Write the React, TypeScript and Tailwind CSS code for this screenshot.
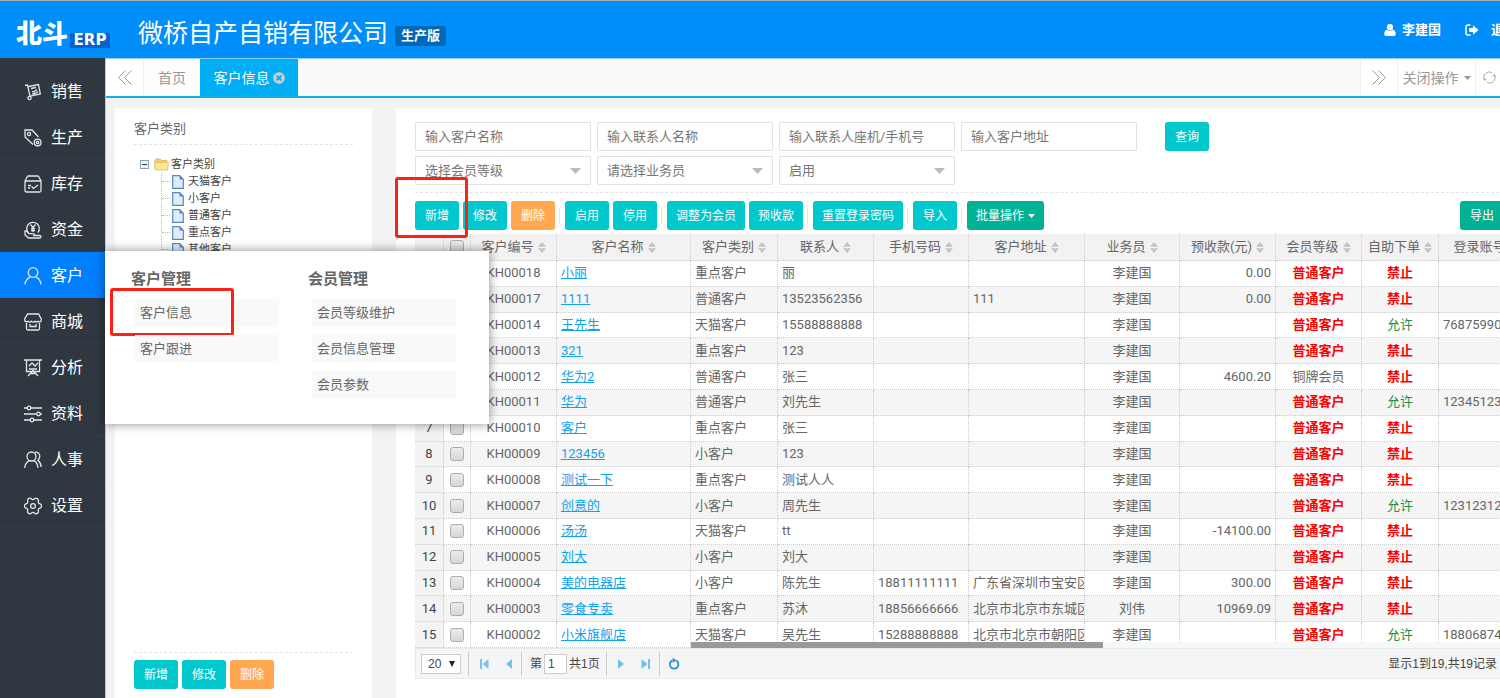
import type { ReactNode } from 'react';
import { FaTimesCircle } from 'react-icons/fa';

type Customer = {
  code: string;
  name: string;
  type: string;
  contact: string;
  phone?: string;
  address?: string;
  sales?: string;
  prepaid?: string;
  level?: string;
  allowed?: boolean;
  account?: string;
};

const customers: Customer[] = [
  { code: 'KH00018', name: '小丽', type: '重点客户', contact: '丽', prepaid: '0.00' },
  { code: 'KH00017', name: '1111', type: '普通客户', contact: '13523562356', address: '111', prepaid: '0.00' },
  { code: 'KH00014', name: '王先生', type: '天猫客户', contact: '15588888888', allowed: true, account: '7687599001' },
  { code: 'KH00013', name: '321', type: '重点客户', contact: '123' },
  { code: 'KH00012', name: '华为2', type: '普通客户', contact: '张三', prepaid: '4600.20', level: '铜牌会员' },
  { code: 'KH00011', name: '华为', type: '普通客户', contact: '刘先生', allowed: true, account: '12345123' },
  { code: 'KH00010', name: '客户', type: '重点客户', contact: '张三' },
  { code: 'KH00009', name: '123456', type: '小客户', contact: '123' },
  { code: 'KH00008', name: '测试一下', type: '重点客户', contact: '测试人人' },
  { code: 'KH00007', name: '创意的', type: '小客户', contact: '周先生', allowed: true, account: '1231231231' },
  { code: 'KH00006', name: '汤汤', type: '天猫客户', contact: 'tt', prepaid: '-14100.00' },
  { code: 'KH00005', name: '刘大', type: '小客户', contact: '刘大' },
  { code: 'KH00004', name: '美的电器店', type: '小客户', contact: '陈先生', phone: '18811111111', address: '广东省深圳市宝安区', prepaid: '300.00' },
  { code: 'KH00003', name: '零食专卖', type: '重点客户', contact: '苏沐', phone: '18856666666', address: '北京市北京市东城区', sales: '刘伟', prepaid: '10969.09' },
  { code: 'KH00002', name: '小米旗舰店', type: '天猫客户', contact: '吴先生', phone: '15288888888', address: '北京市北京市朝阳区', allowed: true, account: '1880687466' },
];

const columns = ['客户编号', '客户名称', '客户类别', '联系人', '手机号码', '客户地址', '业务员', '预收款(元)', '会员等级', '自助下单', '登录账号'];

const treeNodes = ['天猫客户', '小客户', '普通客户', '重点客户', '其他客户'];

const flyout = [
  { title: '客户管理', items: ['客户信息', '客户跟进'] },
  { title: '会员管理', items: ['会员等级维护', '会员信息管理', '会员参数'] },
];

const menu: { label: string; icon: ReactNode }[] = [
  {
    label: '销售',
    icon: (
      <>
        <path d="M1 2.5l2.5-.5 2.7 12M4.5 3.5l10-2 1.8 9.5-10 2.2M7 5.5l5-1M13 6.5l-3 2.3-2-.5M14 8.5l-3 2-3 .3" />
        <circle cx="5.5" cy="15" r="1.6" />
      </>
    ),
  },
  {
    label: '生产',
    icon: (
      <>
        <path d="M9 15.5L1 8V1h7l6.5 7" />
        <circle cx="5" cy="5" r="1.6" />
        <circle cx="13.6" cy="13.6" r="3.4" />
        <circle cx="13.6" cy="13.6" r="1.2" />
      </>
    ),
  },
  {
    label: '库存',
    icon: (
      <path d="M1 6l2.2-4.2C3.5 1.2 4 1 4.5 1h9c.5 0 1 .2 1.3.8L17 6v9.5c0 1-.5 1.5-1.5 1.5h-13C1.5 17 1 16.5 1 15.5zM1 6h16M4 10.5h3M4 13h2M7.5 11.5l2 2 4.5-3.5" />
    ),
  },
  {
    label: '资金',
    icon: (
      <>
        <path d="M4.5 12A6.3 6.3 0 1 1 14 11.5M6.5 3.5L9 6.5l2.5-3M9 6.5V11M7 7.500h4M7 9.5h4" />
        <path d="M1 10v4l3.500 3h11c2 0 2-2.500 0-2.500H10c1.500-1.800-1-1.800-2-1.800H5L2.500 10z" />
      </>
    ),
  },
  {
    label: '客户',
    icon: (
      <>
        <circle cx="9" cy="5.5" r="4.8" />
        <path d="M1 17.5c.3-4 2.5-6.500 5.5-7.7M17 17.5c-.3-4-2.5-6.500-5.5-7.7" />
      </>
    ),
  },
  {
    label: '商城',
    icon: (
      <path d="M3.5 1h11L17.3 6v1.5a2 2 0 0 1-3.3.8 2.3 2.3 0 0 1-3.3 0 2.3 2.3 0 0 1-3.4 0 2.3 2.3 0 0 1-3.3 0A2 2 0 0 1 .7 7.5V6zM2.5 10v5.5c0 1 .5 1.5 1.5 1.5h10c1 0 1.5-.5 1.5-1.5V10M6 11v2.5h6V11" />
    ),
  },
  {
    label: '分析',
    icon: <path d="M0 1h18M2.5 1v11.5h13V1M5 7l3-3 3 3 3-3M4 17l5-5.5L14 17M5 10h8M6 14.5h6" />,
  },
  {
    label: '资料',
    icon: (
      <>
        <path d="M0 3h3M7 3h11M0 9h12.5M16.5 9H18M0 15h6M10 15h8" />
        <circle cx="5" cy="3" r="1.8" />
        <circle cx="14.5" cy="9" r="1.8" />
        <circle cx="8" cy="15" r="1.8" />
      </>
    ),
  },
  {
    label: '人事',
    icon: (
      <>
        <circle cx="7.5" cy="5.5" r="4.5" />
        <path d="M.7 17c.3-3.5 1.8-6 4.8-7.3M14 17c-.2-3.5-1.5-6-4.3-7.3M11 1.2c3-.2 5 1.5 4.8 4.3-.1 1.7-.8 2.8-2 3.7 2 1.5 3.2 3.8 3.5 6.8" />
      </>
    ),
  },
  {
    label: '设置',
    icon: (
      <>
        <path d="M9 2.7c1.5 0 1.8-1.5 2.7-1.5 1 0 2.5 1 2.7 1.8.2.9-.6 1.7.1 2.9.7 1 2.3.9 2.6 1.7.2.5.2 2.3 0 2.8-.3.8-1.9.7-2.6 1.7-.7 1.2.1 2-.1 2.9-.2.8-1.7 1.8-2.7 1.8-.9 0-1.2-1.5-2.7-1.5s-1.8 1.5-2.7 1.5c-1 0-2.5-1-2.7-1.8-.2-.9.6-1.7-.1-2.9-.7-1-2.3-.9-2.6-1.7-.2-.5-.2-2.3 0-2.8.3-.8 1.9-.7 2.6-1.7.7-1.2-.1-2 .1-2.9.2-.8 1.7-1.8 2.7-1.8.9 0 1.2 1.5 2.7 1.5z" />
        <circle cx="9" cy="9" r="2.4" />
      </>
    ),
  },
];

function Btn({ children, tone = 'cyan' }: { children: ReactNode; tone?: 'cyan' | 'orange' | 'green' }) {
  const tones = {
    cyan: 'bg-[#00c8cc]',
    orange: 'bg-[#ffa751]',
    green: 'bg-[#00b294]',
  };
  return (
    <button
      type="button"
      className={`flex h-[29px] min-w-11 shrink-0 items-center justify-center gap-1 rounded-[3px] px-[9px] text-xs text-white ${tones[tone]}`}
    >
      {children}
    </button>
  );
}

function Divider() {
  return <span className="mr-px h-4 w-px shrink-0 bg-[#e2e2e2]" />;
}

function Caret({ className }: { className: string }) {
  return (
    <svg viewBox="0 0 10 5" preserveAspectRatio="none" className={className} fill="currentColor" aria-hidden="true">
      <path d="M0 0h10L5 5z" />
    </svg>
  );
}

function SortIcon() {
  return (
    <svg viewBox="0 0 8 11" className="h-[11px] w-2 shrink-0 text-[#c4c4c4]" fill="currentColor" aria-hidden="true">
      <path d="M4 0l4 4.8H0zM4 11l4-4.8H0z" />
    </svg>
  );
}

function FilterInput({ label }: { label: string }) {
  return (
    <input
      type="text"
      aria-label={label}
      placeholder={label}
      className="h-[29px] w-44 shrink-0 rounded-[1px] border border-[#e2e2e2] bg-white px-[9px] text-[13px] text-[#777] placeholder:text-[#777]"
    />
  );
}

function FilterSelect({ label, value }: { label: string; value: string }) {
  return (
    <div className="relative w-44 shrink-0">
      <select
        aria-label={label}
        className="h-[29px] w-full appearance-none rounded-[1px] border border-[#e2e2e2] bg-white px-[9px] text-[13px] text-[#777]"
      >
        <option>{value}</option>
      </select>
      <Caret className="pointer-events-none absolute top-3 right-[10px] h-[6px] w-[11px] text-[#bbb]" />
    </div>
  );
}

function RowCheck({ label }: { label: string }) {
  return (
    <input
      type="checkbox"
      aria-label={label}
      className="mx-auto block size-[14px] appearance-none rounded-[3px] border border-[#adadad] bg-linear-to-b from-[#ececec] to-[#d6d6d6]"
    />
  );
}

function PagerButton({ label, children }: { label: string; children: ReactNode }) {
  return (
    <button type="button" aria-label={label} className="flex size-[25px] items-center justify-center text-[#74c3ee]">
      <svg viewBox="0 0 12 12" className="size-3" fill="currentColor" aria-hidden="true">
        {children}
      </svg>
    </button>
  );
}

function Header() {
  return (
    <header className="flex h-[58px] shrink-0 items-center justify-between border-t border-[#9fb0bd] bg-[#008efa] pr-4 pl-4 text-white">
      <div className="flex items-center pt-2">
        {/* Logo */}
        <div className="flex w-[122px] items-end">
          <span className="text-[26px] leading-7 font-black">北斗</span>
          <span className="ml-[2px] flex h-[15px] w-10 items-center justify-center bg-[#0a62cf] font-['DejaVu_Sans'] text-[15px] leading-none font-bold">
            ERP
          </span>
        </div>
        <h1 className="text-[25px] leading-8">微桥自产自销有限公司</h1>
        <span className="mt-1 ml-[7px] rounded-[2px] bg-[#0068b4] px-[6px] text-[13px] leading-5 font-bold">生产版</span>
      </div>

      <div className="flex items-center text-[13px] font-bold">
        <a href="#" className="flex items-center gap-[6px]">
          <svg viewBox="0 0 12 12" className="size-3" fill="currentColor" aria-hidden="true">
            <circle cx="6" cy="3.2" r="3.1" />
            <path d="M3 5.600C1 6.200.3 8 .3 10c0 1.400.8 2 1.900 2h7.600c1.100 0 1.900-.6 1.900-2 0-2-.7-3.800-2.700-4.400C8.200 6.400 7.200 6.800 6 6.800S3.800 6.400 3 5.600z" />
          </svg>
          李建国
        </a>
        <a href="#" className="ml-6 flex items-center gap-3">
          <svg viewBox="0 0 14 12" className="h-3 w-[14px]" aria-hidden="true">
            <path d="M5.5 1H3a2 2 0 0 0-2 2v6a2 2 0 0 0 2 2h2.5" fill="none" stroke="currentColor" strokeWidth="1.5" />
            <path d="M8 1.200L13.500 6 8 10.800V8H4.200V4H8z" fill="currentColor" />
          </svg>
          退出
        </a>
      </div>
    </header>
  );
}

function Flyout() {
  return (
    <div className="absolute -top-px left-full z-20 flex h-[173px] w-[384px] gap-[29px] bg-white pt-4 pl-[26px] shadow-[0_0_10px_rgba(0,0,0,0.45)]">
      {flyout.map((group) => (
        <section key={group.title} className="w-[148px]">
          <h2 className="text-[15px] leading-6 font-bold text-[#666]">{group.title}</h2>
          <ul className="mt-2 ml-1 space-y-2">
            {group.items.map((item) => (
              <li key={item} className="relative">
                <a href="#" className="block bg-[#f9f9f9] px-[5px] text-[13px] leading-7 text-[#666]">
                  {item}
                </a>
                {item === '客户信息' && (
                  <span className="absolute -top-[11px] -left-[25px] h-12 w-[124px] rounded-[3px] border-3 border-[#ff2015]" />
                )}
              </li>
            ))}
          </ul>
        </section>
      ))}
    </div>
  );
}

function Sidebar() {
  return (
    <nav className="relative z-20 w-[106px] shrink-0 border-r border-[#c4c8cb] bg-[#2f3840] pt-[10px]" aria-label="主菜单">
      {menu.map(({ label, icon }) => (
        <div key={label} className="relative">
          <a
            href="#"
            className={`flex h-[46px] items-center gap-[9px] border-b pt-[3px] pl-6 text-base text-white ${
              label === '客户' ? 'border-[#007fff] bg-[#007fff]' : 'border-[#343d46]'
            }`}
          >
            <svg viewBox="0 0 18 18" className="size-[18px]" fill="none" stroke="#e4e6e8" strokeWidth="1.3" aria-hidden="true">
              {icon}
            </svg>
            {label}
          </a>
          {label === '客户' && <Flyout />}
        </div>
      ))}
    </nav>
  );
}

function TabBar() {
  return (
    <div className="flex h-10 shrink-0 border-t border-b-2 border-t-[#8fd0fb] border-b-[#12adf0] bg-[#fafafa] text-sm text-[#999]">
      <button type="button" aria-label="向左" className="flex w-[38px] items-center justify-center border-r border-[#eee] bg-white">
        <svg viewBox="0 0 14 15" className="h-[15px] w-[14px]" fill="none" stroke="#999" aria-hidden="true">
          <path d="M7.5.5l-7 7 7 7M13.5.5l-7 7 7 7" />
        </svg>
      </button>
      <a href="#" className="flex w-14 items-center justify-center bg-[#fdfdfd]">
        首页
      </a>
      <div className="flex w-[98px] items-center justify-center gap-[3px] bg-[#00aef5] text-white">
        <a href="#">客户信息</a>
        <button type="button" aria-label="关闭">
          <FaTimesCircle className="size-3 text-[#ccc]" />
        </button>
      </div>
      <div className="ml-auto flex bg-white">
        <button type="button" aria-label="向右" className="flex w-[38px] items-center justify-center border-x border-[#eee]">
          <svg viewBox="0 0 14 15" className="h-[15px] w-[14px]" fill="none" stroke="#999" aria-hidden="true">
            <path d="M.5.5l7 7-7 7M6.5.5l7 7-7 7" />
          </svg>
        </button>
        <button type="button" className="flex w-[78px] items-center justify-center gap-[5px] border-r border-[#eee]">
          关闭操作
          <Caret className="h-1 w-[7px]" />
        </button>
        <button type="button" className="flex w-[57px] items-center gap-1 pl-[7px]">
          <svg viewBox="0 0 13 13" className="size-[13px] shrink-0" fill="none" stroke="#aaa" aria-hidden="true">
            <path d="M1.5 9A5.5 5.5 0 0 1 9 1.6M11.5 4A5.5 5.5 0 0 1 4 11.4M.5 7l1 2.3L3.7 8M12.5 6l-1-2.3L9.3 5" />
          </svg>
          刷新
        </button>
      </div>
    </div>
  );
}

function CategoryPanel() {
  return (
    <aside className="flex w-[257px] shrink-0 flex-col bg-white px-[19px] pb-[9px]">
      <h2 className="border-b border-dashed border-[#e4e4e4] pt-[11px] pb-[5px] text-[13px] leading-5 text-[#666]">客户类别</h2>
      <div className="flex-1 pt-[11px] pl-[6px] text-[11px] leading-[17px] text-[#444]">
        <div className="flex items-center">
          <svg viewBox="0 0 9 9" className="size-[9px]" aria-hidden="true">
            <rect x=".5" y=".5" width="8" height="8" fill="#eef3f7" stroke="#8aa5b8" />
            <path d="M2 4.5h5" stroke="#333" />
          </svg>
          <svg viewBox="0 0 15 13" className="mr-[2px] ml-[5px] h-[13px] w-[15px]" aria-hidden="true">
            <path d="M1 11V2.5L2 1h4l1.5 1.5H13V11z" fill="#f3d06c" stroke="#d9ab3e" strokeWidth=".7" />
            <path d="M.5 4.5h14L13.5 12h-12z" fill="#fde89a" stroke="#e0b650" strokeWidth=".7" />
          </svg>
          客户类别
        </div>
        <ul className="ml-[21px] border-l border-dotted border-[#bbb]">
          {treeNodes.map((node) => (
            <li key={node} className="flex items-center">
              <span className="w-2 border-t border-dotted border-[#bbb]" />
              <svg viewBox="0 0 12 14" className="mr-1 ml-[2px] h-[14px] w-3" aria-hidden="true">
                <path d="M.7.7h7l3.6 3.6v9H.7z" fill="#dceefc" stroke="#5f84bd" strokeWidth="1.2" />
                <path d="M7.5.7v3.8h3.8z" fill="#5f84bd" />
              </svg>
              {node}
            </li>
          ))}
        </ul>
      </div>
      <div className="flex gap-1 border-t border-dashed border-[#e4e4e4] pt-[7px]">
        <Btn>新增</Btn>
        <Btn>修改</Btn>
        <Btn tone="orange">删除</Btn>
      </div>
    </aside>
  );
}

function Toolbar() {
  return (
    <div className="mt-[7px] flex items-center gap-1 border-t border-dashed border-[#e4e4e4] pt-2 pb-1">
      <div className="relative">
        <Btn>新增</Btn>
        <span className="pointer-events-none absolute -top-6 -left-5 z-10 h-[61px] w-[73px] rounded-[3px] border-3 border-[#ff2015]" />
      </div>
      <Btn>修改</Btn>
      <Btn tone="orange">删除</Btn>
      <Divider />
      <Btn>启用</Btn>
      <Btn>停用</Btn>
      <Divider />
      <Btn>调整为会员</Btn>
      <Btn>预收款</Btn>
      <Divider />
      <Btn>重置登录密码</Btn>
      <Divider />
      <Btn>导入</Btn>
      <Divider />
      <Btn tone="green">
        批量操作
        <Caret className="h-1 w-[7px]" />
      </Btn>
      <div className="ml-auto">
        <Btn tone="green">导出</Btn>
      </div>
    </div>
  );
}

const cell = 'overflow-hidden border-r border-b border-dotted border-[#ccc] px-1 whitespace-nowrap';

function CustomerGrid() {
  return (
    <div className="relative overflow-hidden">
      <table className="h-[414px] w-full min-w-[1118px] table-fixed border-separate border-spacing-0 text-[13px] leading-5 text-[#666]">
        <colgroup>
          <col className="w-[29px]" />
          <col className="w-[27px]" />
          <col className="w-[86px]" />
          <col className="w-[134px]" />
          <col className="w-[87px]" />
          <col className="w-24" />
          <col className="w-[95px]" />
          <col className="w-[116px]" />
          <col className="w-[95px]" />
          <col className="w-24" />
          <col className="w-[86px]" />
          <col className="w-[77px]" />
          <col className="w-[94px]" />
        </colgroup>
        <thead>
          <tr className="h-[27px] bg-[#f2f2f2]">
            <th className={cell} aria-label="序号" />
            <th className={cell}>
              <RowCheck label="全选" />
            </th>
            {columns.map((title) => (
              <th key={title} className={`${cell} font-normal`}>
                <span className="flex items-center justify-center gap-1">
                  {title}
                  <SortIcon />
                </span>
              </th>
            ))}
          </tr>
        </thead>
        <tbody>
          {customers.map((c, i) => (
            <tr key={c.code} className="even:bg-[#f5f5f5]">
              <td className={`${cell} bg-[#f3f3f3] text-center text-[#444]`}>{i + 1}</td>
              <td className={cell}>
                <RowCheck label={c.code} />
              </td>
              <td className={`${cell} text-center`}>{c.code}</td>
              <td className={cell}>
                <a href="#" className="text-[#12a2ec] underline">
                  {c.name}
                </a>
              </td>
              <td className={cell}>{c.type}</td>
              <td className={cell}>{c.contact}</td>
              <td className={cell}>{c.phone}</td>
              <td className={cell}>{c.address}</td>
              <td className={`${cell} text-center`}>{c.sales ?? '李建国'}</td>
              <td className={`${cell} text-right`}>{c.prepaid}</td>
              <td className={`${cell} text-center ${c.level ? '' : 'font-bold text-[#f00]'}`}>{c.level ?? '普通客户'}</td>
              <td className={`${cell} text-center ${c.allowed ? 'text-[#1d8f45]' : 'font-bold text-[#f00]'}`}>
                {c.allowed ? '允许' : '禁止'}
              </td>
              <td className={cell}>{c.account}</td>
            </tr>
          ))}
        </tbody>
      </table>
      {/* Horizontal scrollbar sits over the last row */}
      <div className="absolute right-0 bottom-0 left-[276px] h-[6px] bg-[#f7f7f7]">
        <div className="h-full w-[412px] bg-[#999]" />
      </div>
    </div>
  );
}

function Pager() {
  return (
    <div className="flex h-[31px] items-center border border-[#e3ebeb] bg-[#f5f5f5] pr-[6px] pl-[5px] font-['Liberation_Sans','Noto_Sans_CJK_SC',sans-serif] text-xs text-[#444]">
      <div className="relative">
        <select aria-label="每页条数" className="h-5 w-10 appearance-none border border-[#ccc] bg-white pl-[6px]">
          <option>20</option>
        </select>
        <Caret className="pointer-events-none absolute top-[7px] right-[6px] h-[6px] w-[6px] text-[#222]" />
      </div>
      <span className="mr-[2px] ml-[7px] h-6 w-px bg-[#ccc]" />
      <PagerButton label="第一页">
        <path d="M2 1h2v10H2zM10.5 1v10L4.5 6z" />
      </PagerButton>
      <PagerButton label="上一页">
        <path d="M9 1v10L3 6z" />
      </PagerButton>
      <span className="mr-2 h-6 w-px bg-[#ccc]" />
      <label className="flex items-center gap-[2px]">
        第
        <input type="text" defaultValue="1" className="h-5 w-[23px] border border-[#ccc] bg-white px-[3px]" />
        共1页
      </label>
      <span className="mr-[2px] ml-[6px] h-6 w-px bg-[#ccc]" />
      <PagerButton label="下一页">
        <path d="M3 1v10l6-5z" />
      </PagerButton>
      <PagerButton label="最后页">
        <path d="M8 1h2v10H8zM1.5 1v10l6-5z" />
      </PagerButton>
      <span className="mr-[2px] h-6 w-px bg-[#ccc]" />
      <button type="button" aria-label="刷新" className="flex size-[25px] items-center justify-center text-[#1a91da]">
        <svg viewBox="0 0 12 12" className="size-3" aria-hidden="true">
          <path d="M8.5 2.8A4.3 4.3 0 1 1 4 2.6" fill="none" stroke="currentColor" strokeWidth="1.8" />
          <path d="M4.5 0l4.3 2.3-4.3 2.5z" fill="currentColor" />
        </svg>
      </button>
      <span className="ml-auto">显示1到19,共19记录</span>
    </div>
  );
}

export default function App() {
  return (
    <div className="h-screen overflow-hidden bg-[#f3f3f3] font-[Roboto,'Noto_Sans_CJK_SC',sans-serif]">
      <div className="flex h-full min-w-[1533px] flex-col">
        <Header />
        <div className="flex min-h-0 flex-1">
          <Sidebar />
          <div className="flex min-w-0 flex-1 flex-col">
            <TabBar />
            <div className="flex min-h-0 flex-1 gap-6 pt-[10px] pr-[10px] pl-[9px]">
              <CategoryPanel />
              <main className="min-w-0 flex-1 bg-white px-[19px] pt-[14px]">
                <div className="flex gap-[6px]">
                  <FilterInput label="输入客户名称" />
                  <FilterInput label="输入联系人名称" />
                  <FilterInput label="输入联系人座机/手机号" />
                  <FilterInput label="输入客户地址" />
                  <div className="ml-[22px]">
                    <Btn>查询</Btn>
                  </div>
                </div>
                <div className="mt-[5px] flex gap-[6px]">
                  <FilterSelect label="会员等级" value="选择会员等级" />
                  <FilterSelect label="业务员" value="请选择业务员" />
                  <FilterSelect label="状态" value="启用" />
                </div>
                <Toolbar />
                <CustomerGrid />
                <Pager />
              </main>
            </div>
          </div>
        </div>
      </div>
    </div>
  );
}
